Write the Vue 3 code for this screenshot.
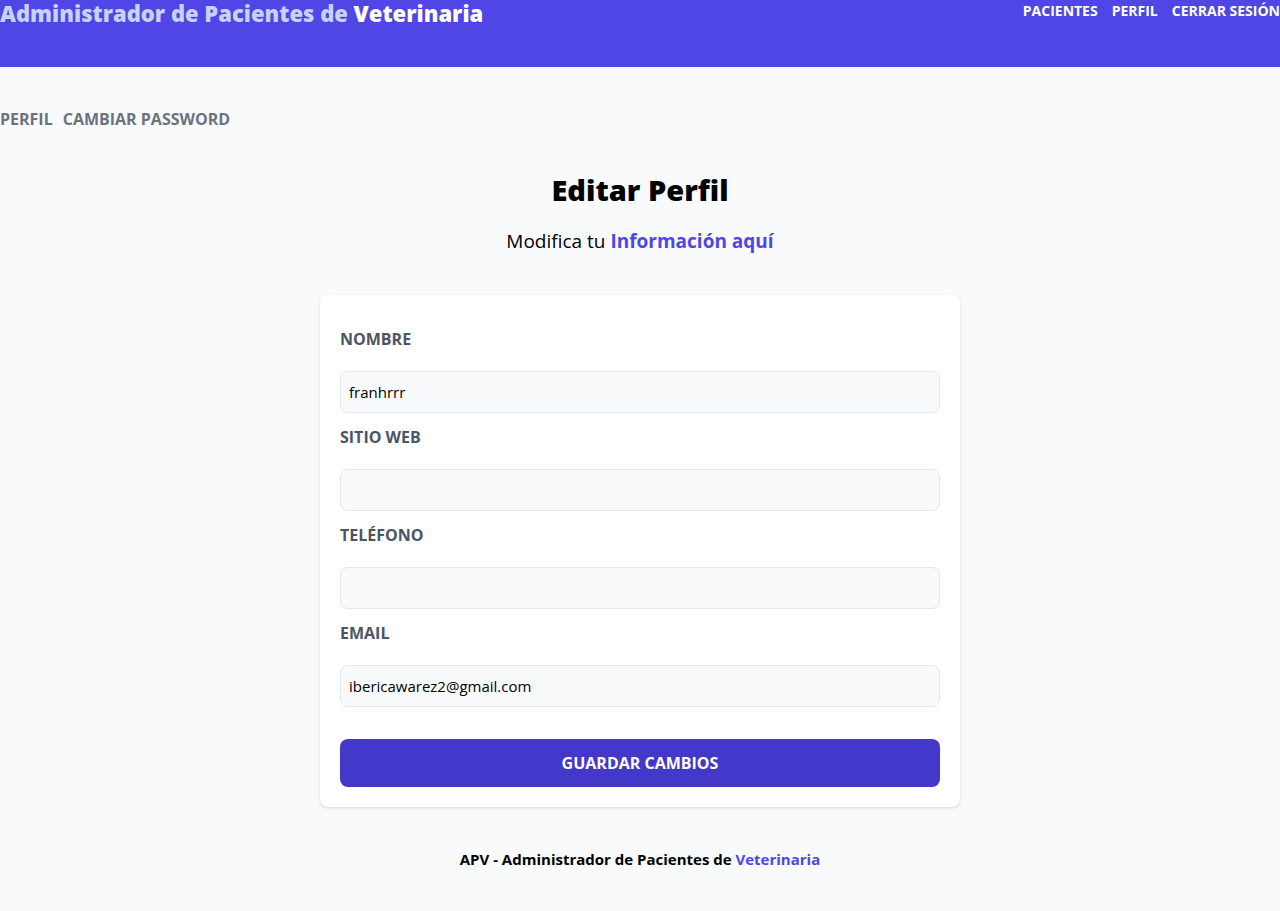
<script setup>
import { reactive } from 'vue'

const profile = reactive({
  nombre: 'franhrrr',
  web: '',
  telefono: '',
  email: 'ibericawarez2@gmail.com'
})

const fields = [
  { key: 'nombre', label: 'Nombre', type: 'text' },
  { key: 'web', label: 'Sitio Web', type: 'text' },
  { key: 'telefono', label: 'Teléfono', type: 'text' },
  { key: 'email', label: 'Email', type: 'text' }
]
</script>

<template>
  <div class="page">
    <header class="header">
      <h1 class="brand">Administrador de Pacientes de <span>Veterinaria</span></h1>
      <nav class="main-nav">
        <a href="#pacientes">Pacientes</a>
        <a href="#perfil">Perfil</a>
        <button type="button">Cerrar Sesión</button>
      </nav>
    </header>

    <main class="content">
      <nav class="sub-nav">
        <a href="#perfil">Perfil</a>
        <a href="#password">Cambiar Password</a>
      </nav>

      <h2 class="title">Editar Perfil</h2>
      <p class="lead">Modifica tu <span>Información aquí</span></p>

      <form class="card" @submit.prevent>
        <div v-for="field in fields" :key="field.key" class="field">
          <label :for="field.key">{{ field.label }}</label>
          <input :id="field.key" v-model="profile[field.key]" :type="field.type" />
        </div>
        <button type="submit" class="save">Guardar Cambios</button>
      </form>
    </main>

    <footer class="footer">APV - Administrador de Pacientes de <span>Veterinaria</span></footer>
  </div>
</template>

<style>
body {
  background: #f9fafb;
}
</style>

<style scoped>
.page,
.page * {
  box-sizing: border-box;
  margin: 0;
}

.page {
  min-height: 100vh;
  background: #f9fafb;
  color: #000;
  font: 16px/24px "Segoe UI", "Open Sans", "Noto Sans", sans-serif;
}

.header {
  display: flex;
  justify-content: space-between;
  align-items: flex-start;
  min-height: 67px;
  background: #4f46e5;
}

.brand {
  color: #c7d2fe;
  font-size: 22px;
  line-height: 26px;
  font-weight: 800;
}

.brand span {
  color: #fff;
}

.main-nav {
  display: flex;
  gap: 14px;
}

.main-nav a,
.main-nav button {
  padding: 0;
  border: 0;
  background: none;
  color: #fff;
  font: inherit;
  font-size: 14px;
  line-height: 22px;
  font-weight: 700;
  text-transform: uppercase;
  text-decoration: none;
}

.content {
  padding-top: 40px;
}

.sub-nav {
  display: flex;
  gap: 10px;
}

.sub-nav a {
  color: #6b7280;
  font-size: 16px;
  font-weight: 700;
  text-transform: uppercase;
  text-decoration: none;
}

.title {
  margin-top: 40px;
  font-size: 29px;
  line-height: 38px;
  font-weight: 800;
  text-align: center;
}

.lead {
  margin-top: 18px;
  margin-bottom: 40px;
  font-size: 19px;
  line-height: 28px;
  text-align: center;
}

.lead span,
.footer span {
  color: #4f46e5;
  font-weight: 700;
}

.card {
  width: 50%;
  margin: 0 auto;
  padding: 20px;
  border-radius: 8px;
  background: #fff;
  box-shadow: 0 1px 3px rgba(0, 0, 0, 0.1), 0 1px 2px rgba(0, 0, 0, 0.06);
}

.field {
  padding-top: 12px;
}

.field label {
  display: block;
  color: #4b5563;
  font-size: 16px;
  font-weight: 700;
  text-transform: uppercase;
}

.field input {
  display: block;
  width: 100%;
  height: 42px;
  margin-top: 20px;
  padding: 8px;
  border: 1px solid #e5e7eb;
  border-radius: 8px;
  background: #f9fafb;
  color: #000;
  font: inherit;
  font-size: 15px;
}

.save {
  display: block;
  width: 100%;
  margin-top: 32px;
  padding: 12px;
  border: 0;
  border-radius: 8px;
  background: #4338ca;
  color: #fff;
  font: inherit;
  font-size: 16px;
  font-weight: 700;
  text-transform: uppercase;
}

.footer {
  padding: 40px 0;
  font-size: 15px;
  font-weight: 700;
  text-align: center;
}
</style>
